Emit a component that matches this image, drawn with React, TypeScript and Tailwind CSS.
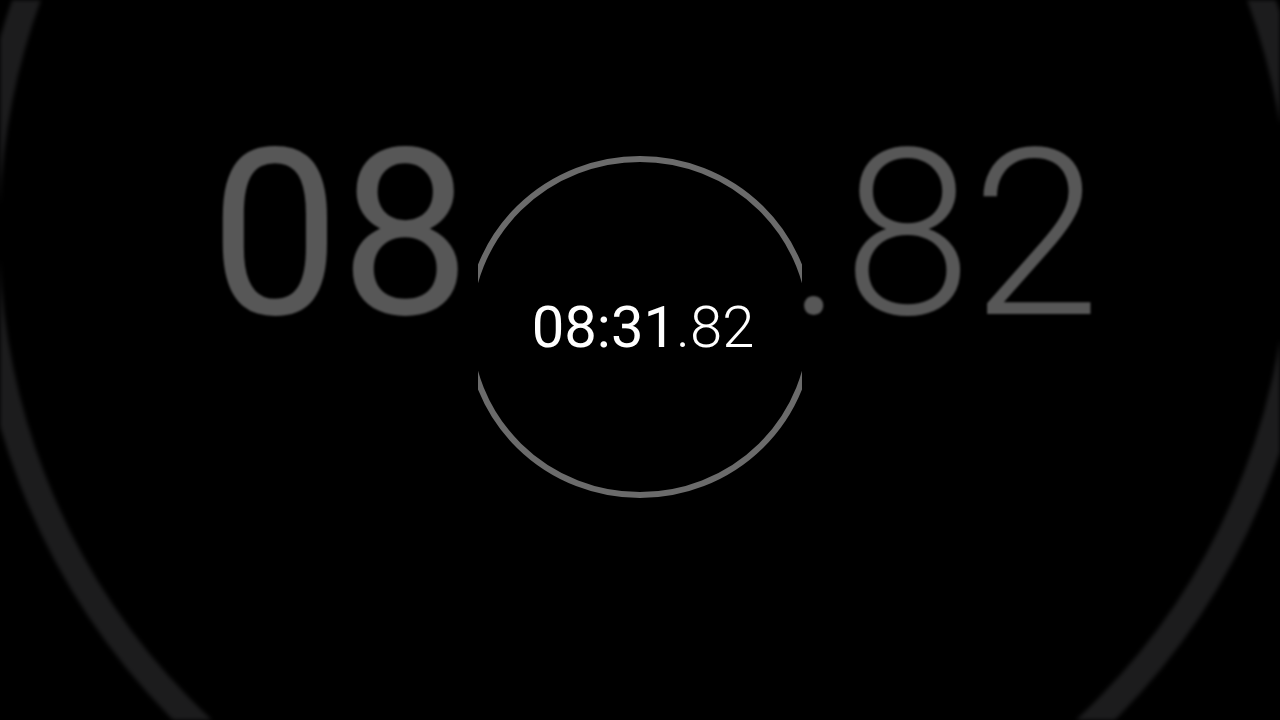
export default function App() {
    return (
        <div
            className="relative w-full h-[720px] bg-black overflow-hidden"
            style={{ fontFamily: "Roboto, 'Liberation Sans', sans-serif" }}
        >
            {/* blurred big ring of the zoomed-in stopwatch behind */}
            <svg className="absolute inset-0 w-full h-full blur-[2px]" viewBox="0 0 1280 720">
                <ellipse cx="644" cy="232" rx="658" ry="671" fill="none" stroke="#1c1c1d" strokeWidth="27" />
            </svg>

            {/* big background time */}
            <div className="relative flex justify-center pt-[119px] pl-[30px] blur-[1px]">
                <div className="text-[232px] leading-none text-[#575757] whitespace-nowrap">
                    <span className="font-normal">08:31</span>
                    <span className="font-light">.82</span>
                </div>
            </div>

            {/* foreground stopwatch, a cropped black frame over the background */}
            <div className="absolute left-[478px] top-[140px] w-[324px] pt-[16px] bg-black overflow-hidden">
                <div className="relative h-[342px]">
                    <svg className="absolute inset-0 w-full h-full" viewBox="0 0 324 342">
                        <ellipse cx="162" cy="171" rx="171" ry="168" fill="#000" stroke="#6b6b6b" strokeWidth="6" />
                    </svg>
                    <div className="relative h-full flex items-center justify-center pl-[6px]">
                        <div className="text-[58px] leading-none text-white whitespace-nowrap">
                            <span className="font-normal">08:31</span>
                            <span className="font-light">.82</span>
                        </div>
                    </div>
                </div>
            </div>
        </div>
    );
}
